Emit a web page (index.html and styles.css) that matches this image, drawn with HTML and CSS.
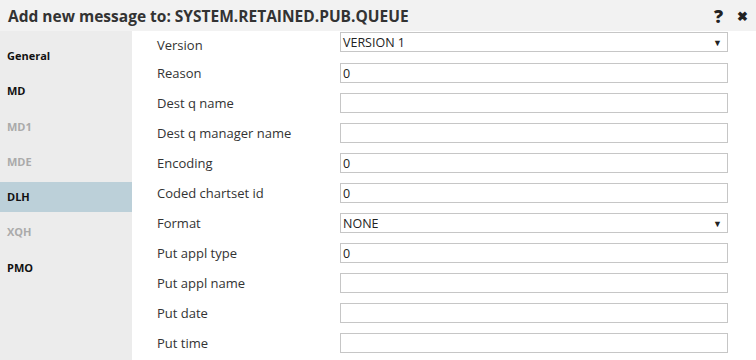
FILE: index.html
```html
<!DOCTYPE html>
<html lang="en">
<head>
    <meta charset="UTF-8">
    <title>Add new message</title>
    <link rel="stylesheet" href="styles.css">
</head>
<body>
    <div class="dialog">
        <div class="dialog-header">
            <div class="dialog-title">Add new message to: SYSTEM.RETAINED.PUB.QUEUE</div>
            <div class="dialog-actions">
                <span class="help">?</span>
                <span class="close">&#x2716;</span>
            </div>
        </div>

        <div class="dialog-body">
            <ul class="tabs">
                <li class="tab">General</li>
                <li class="tab">MD</li>
                <li class="tab disabled">MD1</li>
                <li class="tab disabled">MDE</li>
                <li class="tab active">DLH</li>
                <li class="tab disabled">XQH</li>
                <li class="tab">PMO</li>
            </ul>

            <form class="fields">
                <div class="field first">
                    <label for="version">Version</label>
                    <div class="select" id="version">VERSION 1<span class="arrow">&#9660;</span></div>
                </div>
                <div class="field">
                    <label for="reason">Reason</label>
                    <input type="text" id="reason" value="0">
                </div>
                <div class="field">
                    <label for="dest-q">Dest q name</label>
                    <input type="text" id="dest-q">
                </div>
                <div class="field">
                    <label for="dest-qm">Dest q manager name</label>
                    <input type="text" id="dest-qm">
                </div>
                <div class="field">
                    <label for="encoding">Encoding</label>
                    <input type="text" id="encoding" value="0">
                </div>
                <div class="field">
                    <label for="ccsid">Coded chartset id</label>
                    <input type="text" id="ccsid" value="0">
                </div>
                <div class="field">
                    <label for="format">Format</label>
                    <div class="select" id="format">NONE<span class="arrow">&#9660;</span></div>
                </div>
                <div class="field">
                    <label for="appl-type">Put appl type</label>
                    <input type="text" id="appl-type" value="0">
                </div>
                <div class="field">
                    <label for="appl-name">Put appl name</label>
                    <input type="text" id="appl-name">
                </div>
                <div class="field">
                    <label for="put-date">Put date</label>
                    <input type="text" id="put-date">
                </div>
                <div class="field">
                    <label for="put-time">Put time</label>
                    <input type="text" id="put-time">
                </div>
            </form>
        </div>
    </div>
</body>
</html>
```

FILE: styles.css
```css
body {
    margin: 0;
    font-family: 'Open Sans', sans-serif;
    color: #333;
    background-color: white;
}

.dialog {
    width: 756px;
    height: 360px;
    overflow: hidden;
}

.dialog-header {
    height: 31px;
    background-color: #f2f2f2;
    display: flex;
    align-items: center;
    justify-content: space-between;
    padding: 0 8px 0 8px;
    box-sizing: border-box;
}

.dialog-title {
    font-size: 15.5px;
    font-weight: bold;
    color: #333;
}

.dialog-actions {
    display: flex;
    align-items: center;
    gap: 14px;
    font-weight: 800;
    color: #222;
}

.help {
    font-size: 18px;
}

.close {
    font-size: 13px;
}

.dialog-body {
    display: flex;
    height: 329px;
}

.tabs {
    list-style: none;
    margin: 0;
    padding: 10px 0 0 0;
    width: 132px;
    background-color: #ececec;
    display: flex;
    flex-direction: column;
    gap: 5.3px;
}

.tab {
    height: 30px;
    line-height: 30px;
    padding-left: 7px;
    font-size: 11px;
    font-weight: bold;
    color: #111;
}

.tab.disabled {
    color: #aaa;
}

.tab.active {
    background-color: #bcd0d9;
}

.fields {
    flex: 1;
    padding-left: 25px;
}

.field {
    display: flex;
    align-items: center;
    height: 30px;
}

.field.first {
    height: 27px;
}

.field.first .select {
    margin-bottom: 5px;
}

label {
    width: 183px;
    font-size: 13px;
    color: #333;
}

input,
.select {
    width: 388px;
    height: 20px;
    box-sizing: border-box;
    border: 1px solid #c6c6c6;
    padding: 0 2px;
    font-family: 'Open Sans', sans-serif;
    font-size: 12.5px;
    color: #222;
    background-color: white;
}

.select {
    display: flex;
    align-items: center;
    justify-content: space-between;
    padding-right: 5px;
}

.arrow {
    font-size: 9px;
}
```
